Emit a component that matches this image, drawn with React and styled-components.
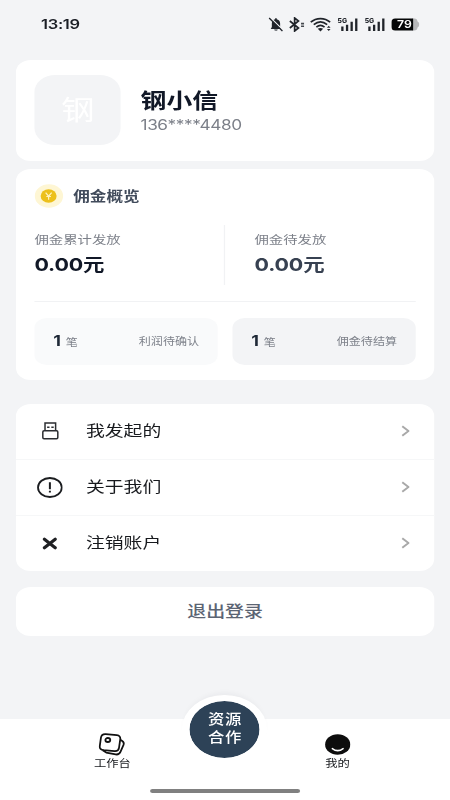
import React from "react";
import styled, { createGlobalStyle } from "styled-components";

/* The display is wider than the device canvas, so the canvas is stretched to fill it. */
const STRETCH = 1.23;

const Global = createGlobalStyle`
  * { box-sizing: border-box; }
  body { margin: 0; background: #f3f4f6; overflow: hidden; }
`;

const Viewport = styled.div`
  width: 450px;
  height: 800px;
  overflow: hidden;
  background: #f3f4f6;
`;

const Screen = styled.div`
  width: ${450 / STRETCH}px;
  height: 800px;
  display: flex;
  flex-direction: column;
  transform: scaleX(${STRETCH});
  transform-origin: 0 0;
  font-family: Inter, "Noto Sans CJK SC", sans-serif;
  color: #1b1e25;
`;

const StatusBar = styled.header`
  height: 60px;
  padding: 12px 24.4px 0 33.4px;
  display: flex;
  justify-content: space-between;
  align-items: flex-start;
`;

const Clock = styled.span`
  font-size: 13.4px;
  line-height: 24px;
  font-weight: 600;
  letter-spacing: -0.25px;
`;

const StatusIcons = styled.div`
  height: 24px;
  display: flex;
  align-items: center;
`;

const Glyph = styled.svg.attrs({ preserveAspectRatio: "none", "aria-hidden": true })`
  display: block;
  flex: none;
  width: ${(p) => p.$w / STRETCH}px;
  height: ${(p) => p.$h}px;
  margin-left: ${(p) => (p.$gap || 0) / STRETCH}px;
`;

const Body = styled.main`
  flex: 1;
  padding: 0 12.4px 0 12.6px;
`;

const Card = styled.section`
  background: #fff;
  border-radius: 12px;
  margin-bottom: ${(p) => p.$after}px;
`;

const Profile = styled(Card)`
  height: 101px;
  padding: 15px 15.7px;
  display: flex;
`;

const Avatar = styled.div`
  width: 70px;
  height: 70px;
  border-radius: 17px;
  background: #f3f4f6;
  color: #fff;
  font-size: 27px;
  line-height: 71px;
  text-align: center;
`;

const Identity = styled.div`
  padding: 11px 0 0 16px;
`;

const Name = styled.div`
  font-size: 21px;
  line-height: 30px;
  font-weight: 700;
  color: #111827;
`;

const Phone = styled.div`
  font-size: 14px;
  line-height: 18px;
  letter-spacing: -0.35px;
  color: #7b7f88;
`;

const Overview = styled(Card)`
  height: 211px;
  padding: 14px 15.4px 0;
`;

const OverviewTitle = styled.div`
  height: 26px;
  display: flex;
  align-items: center;
  gap: 8px;
  font-size: 13.5px;
  font-weight: 700;
  color: #414b5b;
`;

const TitleText = styled.span`
  line-height: 24px;
  padding-bottom: 1px;
`;

const Stats = styled.div`
  margin-top: 16px;
  height: 60px;
  display: grid;
  grid-template-columns: 154.3px 1fr;
`;

const Stat = styled.div`
  & + & {
    border-left: 1px solid #f1f2f4;
    padding-left: 23.6px;
  }
`;

const StatLabel = styled.div`
  padding-top: 5px;
  font-size: 11.7px;
  line-height: 20px;
  color: #7d818a;
`;

const StatValue = styled.div`
  font-size: 17.4px;
  line-height: 30px;
  font-weight: 700;
  letter-spacing: -0.1px;
  color: ${(p) => (p.$muted ? "#374151" : "#111827")};
`;

const Pending = styled.div`
  margin-top: 16px;
  border-top: 1px solid #f1f2f4;
  padding-top: 16px;
  display: grid;
  grid-template-columns: 1fr 1fr;
  gap: 11.8px;
`;

const PendingBox = styled.div`
  height: 47px;
  padding: 0 15.3px 2px;
  border-radius: 10px;
  background: ${(p) => (p.$strong ? "#f3f4f6" : "#f9fafb")};
  display: flex;
  align-items: center;
  justify-content: space-between;
  font-size: 9.8px;
  color: #7d818a;
`;

const Count = styled.span`
  display: flex;
  align-items: baseline;
  gap: 4px;
`;

const CountNumber = styled.b`
  font-size: 14.5px;
  font-weight: 700;
  color: #1f2937;
`;

const MenuRow = styled.div`
  height: 56px;
  display: flex;
  align-items: center;
  border-bottom: 1px solid #f6f7f8;
  &:last-child {
    height: 55.5px;
    border-bottom: 0;
  }
`;

const MenuIcon = styled.span`
  width: 56px;
  display: flex;
  justify-content: center;
`;

const MenuLabel = styled.span`
  flex: 1;
  padding: 0 0 1px 1.3px;
  font-size: 15.3px;
  line-height: 24px;
  color: #17191d;
`;

const Chevron = styled.span`
  margin-right: 20px;
`;

const Logout = styled.button`
  width: 100%;
  height: 49px;
  border: 0;
  padding: 0;
  border-radius: 12px;
  background: #fff;
  font: 500 15.4px/49px Inter, "Noto Sans CJK SC", sans-serif;
  color: #5b6473;
`;

const TabBar = styled.nav`
  height: 81.5px;
  background: #fff;
  position: relative;
  display: flex;
  justify-content: space-between;
  padding: 15px 80.8px 0 76.4px;
`;

const Tab = styled.div`
  display: flex;
  flex-direction: column;
  align-items: center;
  font-size: 10px;
  line-height: 14px;
  color: #17191d;
`;

const TabPicture = styled.span`
  height: 22px;
  display: flex;
  align-items: center;
`;

const CenterButton = styled.div`
  position: absolute;
  left: 50%;
  top: -24px;
  width: 69px;
  height: 69px;
  margin-left: -34.6px;
  border: 6px solid #fff;
  border-radius: 50%;
  background: #2d4257;
  background-clip: padding-box;
  box-shadow: 0 -4px 6px -3px rgba(30, 40, 50, 0.06);
  color: #fff;
  display: flex;
  align-items: center;
  justify-content: center;
  text-align: center;
  padding: 0 0 2px 0.4px;
  font-size: 13.3px;
  line-height: 18px;
  font-weight: 500;
  letter-spacing: 0.7px;
`;

const HomeIndicator = styled.div`
  position: absolute;
  bottom: 7px;
  left: 121.9px;
  width: 122px;
  height: 4px;
  border-radius: 2px;
  background: #808080;
`;

const MutedBell = () => (
  <Glyph $w={16} $h={15} viewBox="0 0 16 15">
    <path d="M2.6 12h10.8L12 10V6.5C12 3.8 10.3 2.6 8.6 2.3V1.3H7v1C4.8 2.7 3.7 4.2 3.7 6.6V10z" fill="#20242a" />
    <path d="M6 12.6h3.6c-.3 1.6-3.2 1.6-3.6 0z" fill="#20242a" />
    <path d="M2 .6l13.3 13" stroke="#f3f4f6" strokeWidth="1.4" />
    <path d="M1 1l13.3 13" stroke="#20242a" strokeWidth="1.3" />
  </Glyph>
);

const Bluetooth = () => (
  <Glyph $w={16} $h={15} $gap={5} viewBox="0 0 16 15">
    <path d="M.8 4l8.6 7-3.8 3V1l3.8 3-8.6 7" fill="none" stroke="#20242a" strokeWidth="1.7" />
    <path d="M12 5.8h3v1.6h-3zM12 8.4h3V10h-3z" fill="#44484e" />
  </Glyph>
);

const Wifi = () => (
  <Glyph $w={22} $h={15} $gap={6} viewBox="0 0 22 15">
    <g fill="none" stroke="#20242a" strokeWidth="1.7">
      <path d="M.8 5.2C6.3.4 14.7.4 20.2 5.2" />
      <path d="M3.8 7.7C8 4.1 13 4.1 17.2 7.7" />
      <path d="M6.4 10.1c2.6-2.2 5.6-2.2 8.2 0" />
    </g>
    <path d="M7.8 11.8c1.5-1.2 3.9-1.2 5.4 0L10.5 14.4z" fill="#20242a" />
    <path d="M17 10.8l1.8-2 1.8 2zM17 12l1.8 2 1.8-2z" fill="#20242a" />
  </Glyph>
);

const Signal = ({ gap }) => (
  <Glyph $w={21} $h={15} $gap={gap} viewBox="0 0 21 15">
    <text x="0.6" y="5.6" fontSize="6.6" fontWeight="800" textLength="9.6" lengthAdjust="spacingAndGlyphs" fill="#20242a">5G</text>
    <path d="M4.2 9.6h2.3v4.4H4.2zM8.9 7.8h2.3V14H8.9zM13.5 4.8h2.3V14h-2.3zM18.1 1.4h2.3V14h-2.3z" fill="#20242a" />
  </Glyph>
);

const Battery = () => (
  <Glyph $w={29} $h={13} $gap={6} viewBox="0 0 29 13">
    <path d="M21 .5h2.2c2 0 3 1 3.2 3 2.4.8 2.4 5.2 0 6-.2 2-1.2 3-3.2 3H21z" fill="#b7b8ba" />
    <path d="M4 .5h18v12H4c-2.4 0-3.6-1.3-3.6-3.6V4C.4 1.8 1.6.5 4 .5z" fill="#050607" />
    <text x="6" y="10.2" fontSize="10.4" fontWeight="600" textLength="14.8" lengthAdjust="spacingAndGlyphs" fill="#fff">79</text>
  </Glyph>
);

const Coin = () => (
  <Glyph $w={29} $h={24} viewBox="0 0 29 24">
    <ellipse cx="14.5" cy="12" rx="14.2" ry="11.8" fill="#fef6d4" />
    <ellipse cx="14.2" cy="12" rx="8" ry="6.7" fill="#ecc01b" />
    <path d="M11.2 8.6l3 3.6 3-3.6M14.2 12v3.7M11.9 12.5h4.6" fill="none" stroke="#fff3c0" strokeWidth="1.2" />
  </Glyph>
);

const UsbIcon = () => (
  <Glyph $w={17} $h={18} viewBox="0 0 17 18">
    <g fill="none" stroke="#2b2d31" strokeWidth="1.5">
      <path d="M3.2 8.8V1h10.6v7.8" />
      <rect x="1" y="8.8" width="15" height="8" rx="1.2" />
      <path d="M5.3 5.2h2.4M9.5 5.2h2.4" />
    </g>
  </Glyph>
);

const NoticeIcon = () => (
  <Glyph $w={26} $h={21} viewBox="0 0 26 21">
    <ellipse cx="13" cy="10.5" rx="11.9" ry="9.5" fill="none" stroke="#1b1d20" strokeWidth="1.8" />
    <path d="M13 5.2v7M13 13.7v1.8" stroke="#1b1d20" strokeWidth="2" />
  </Glyph>
);

const CrossIcon = () => (
  <Glyph $w={16} $h={13} viewBox="0 0 16 13">
    <path d="M2.6 2.2l10.8 8.6M13.4 2.2L2.6 10.8" stroke="#1f2023" strokeWidth="3.2" strokeLinecap="round" />
  </Glyph>
);

const ArrowIcon = () => (
  <Glyph $w={9} $h={12} viewBox="0 0 9 12">
    <path d="M1.3 1.2L7.5 6l-6.2 4.8" fill="none" stroke="#a9a9a9" strokeWidth="2" />
  </Glyph>
);

const CardsIcon = () => (
  <Glyph $w={27} $h={23} viewBox="0 0 27.5 23">
    <g fill="none" stroke="#111" strokeWidth="1.8" strokeLinejoin="round">
      <path d="M7.5 1.1l11.3 1.1c2.6.3 3.8 1.9 3.5 3.9l-1.3 8.7c-.4 2.5-2 3.5-4.6 3.3L5.3 17.2c-2.8-.3-4.2-1.8-3.9-4.1l1.2-8.4c.4-2.5 2.2-3.8 4.9-3.6z" />
      <path d="M22.4 6.8l1.9 1.2c1.6 1 2 2.2 1.3 3.9l-3 6.7c-1.1 2.4-2.6 3.2-5 2.8L8 19.6l-3.6-2.4" />
      <ellipse cx="9.6" cy="7" rx="2.5" ry="2" />
    </g>
  </Glyph>
);

const FaceIcon = () => (
  <Glyph $w={26} $h={21} viewBox="0 0 26 21">
    <ellipse cx="13" cy="10.5" rx="12.6" ry="10.2" fill="#0d0d0d" />
    <path d="M7.6 14.6c3.2 2.4 7.6 2.4 10.8 0" fill="none" stroke="#fff" strokeWidth="1.5" strokeLinecap="round" />
  </Glyph>
);

const MENU = [
  { label: "我发起的", Icon: UsbIcon },
  { label: "关于我们", Icon: NoticeIcon },
  { label: "注销账户", Icon: CrossIcon },
];

export default function App() {
  return (
    <Viewport>
      <Global />
      <Screen>
        <StatusBar>
          <Clock>13:19</Clock>
          <StatusIcons>
            <MutedBell />
            <Bluetooth />
            <Wifi />
            <Signal gap={5} />
            <Signal gap={5.5} />
            <Battery />
          </StatusIcons>
        </StatusBar>
        <Body>
          <Profile $after={8}>
            <Avatar>钢</Avatar>
            <Identity>
              <Name>钢小信</Name>
              <Phone>136****4480</Phone>
            </Identity>
          </Profile>
          <Overview $after={23.5}>
            <OverviewTitle>
              <Coin />
              <TitleText>佣金概览</TitleText>
            </OverviewTitle>
            <Stats>
              <Stat>
                <StatLabel>佣金累计发放</StatLabel>
                <StatValue>0.00元</StatValue>
              </Stat>
              <Stat>
                <StatLabel>佣金待发放</StatLabel>
                <StatValue $muted>0.00元</StatValue>
              </Stat>
            </Stats>
            <Pending>
              <PendingBox>
                <Count><CountNumber>1</CountNumber>笔</Count>
                <span>利润待确认</span>
              </PendingBox>
              <PendingBox $strong>
                <Count><CountNumber>1</CountNumber>笔</Count>
                <span>佣金待结算</span>
              </PendingBox>
            </Pending>
          </Overview>
          <Card $after={15.5}>
            {MENU.map(({ label, Icon }) => (
              <MenuRow key={label}>
                <MenuIcon><Icon /></MenuIcon>
                <MenuLabel>{label}</MenuLabel>
                <Chevron><ArrowIcon /></Chevron>
              </MenuRow>
            ))}
          </Card>
          <Logout>退出登录</Logout>
        </Body>
        <TabBar>
          <Tab>
            <TabPicture><CardsIcon /></TabPicture>
            工作台
          </Tab>
          <CenterButton>资源<br />合作</CenterButton>
          <Tab>
            <TabPicture><FaceIcon /></TabPicture>
            我的
          </Tab>
          <HomeIndicator />
        </TabBar>
      </Screen>
    </Viewport>
  );
}
